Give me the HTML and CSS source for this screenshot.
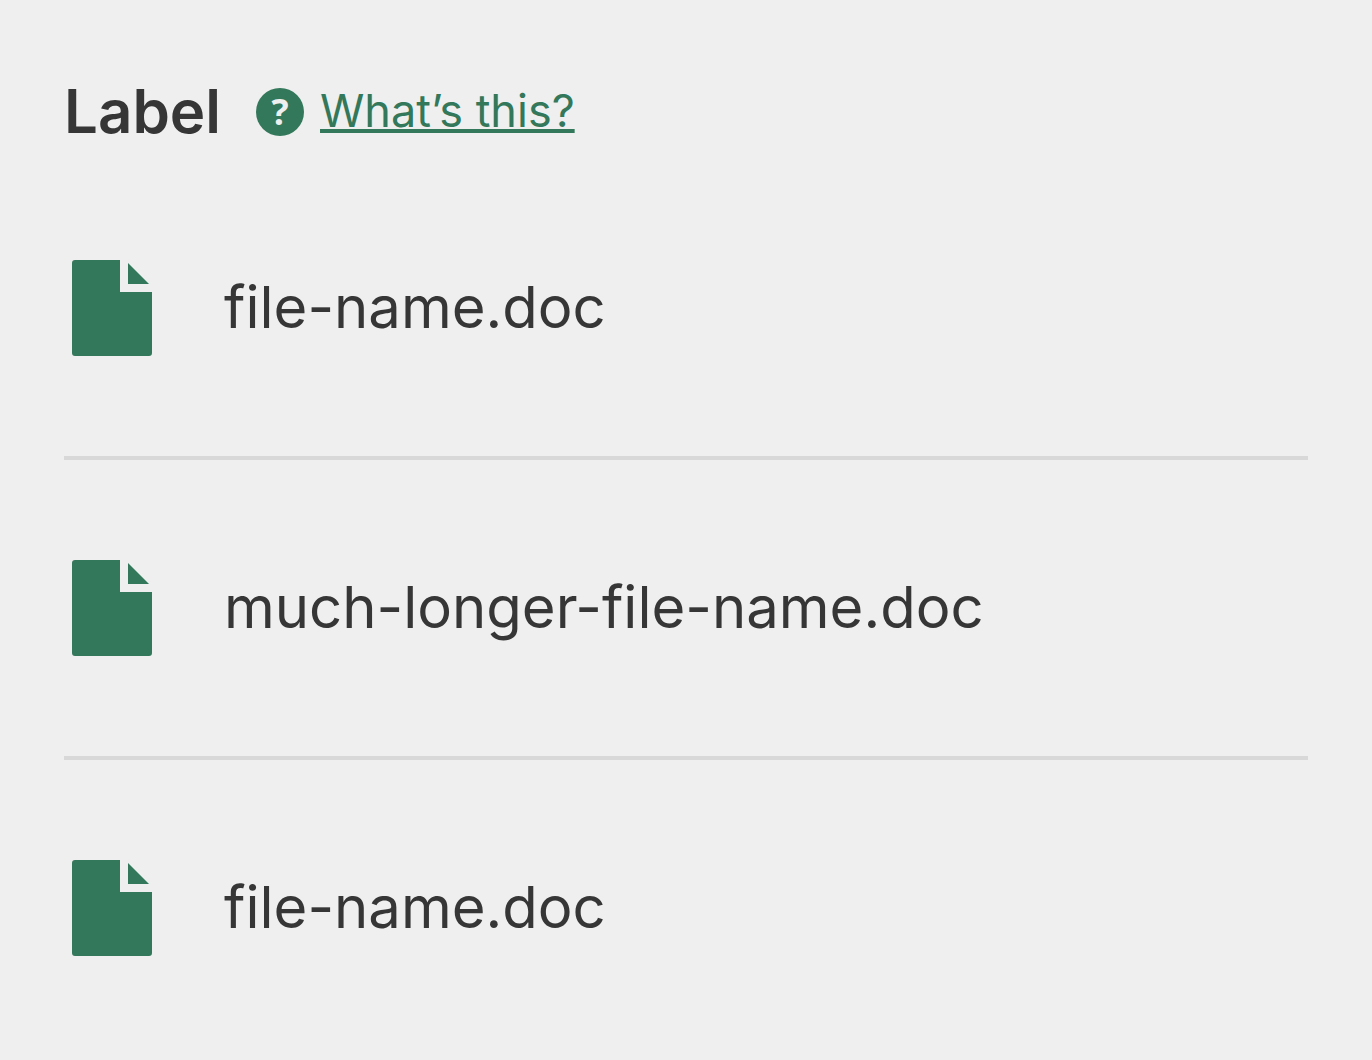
FILE: index.html
```html
<!DOCTYPE html>
<html lang="en">
<head>
<meta charset="utf-8">
<title>Files</title>
<meta name="viewport" content="width=device-width, initial-scale=1">
<link rel="stylesheet" href="styles.css">
</head>
<body>
<main class="panel">
  <header class="panel-header">
    <h1 class="label">Label</h1>
    <a class="help" href="#help">
      <span class="help-icon" aria-hidden="true">?</span>
      <span class="help-text">What’s this?</span>
    </a>
  </header>
  <ul class="files">
    <li class="file">
      <svg class="file-icon" viewBox="0 0 80 96" aria-hidden="true"><path d="M3 0H48V32H80V93Q80 96 77 96H3Q0 96 0 93V3Q0 0 3 0Z"/><path d="M56 3L77 24H56Z"/></svg>
      <span class="file-name">file-name.doc</span>
    </li>
    <li class="file">
      <svg class="file-icon" viewBox="0 0 80 96" aria-hidden="true"><path d="M3 0H48V32H80V93Q80 96 77 96H3Q0 96 0 93V3Q0 0 3 0Z"/><path d="M56 3L77 24H56Z"/></svg>
      <span class="file-name">much-longer-file-name.doc</span>
    </li>
    <li class="file">
      <svg class="file-icon" viewBox="0 0 80 96" aria-hidden="true"><path d="M3 0H48V32H80V93Q80 96 77 96H3Q0 96 0 93V3Q0 0 3 0Z"/><path d="M56 3L77 24H56Z"/></svg>
      <span class="file-name">file-name.doc</span>
    </li>
  </ul>
</main>
</body>
</html>
```
FILE: styles.css
```css
* {
  box-sizing: border-box;
}

body {
  margin: 0;
  background: #efefef;
  color: #363636;
  font-family: Inter, "Liberation Sans", Arial, sans-serif;
}

.panel {
  padding: 64px 64px 0;
}

.panel-header {
  display: flex;
  align-items: center;
  gap: 35px;
  height: 96px;
}

.label {
  margin: 0;
  padding-bottom: 2px;
  font-size: 60px;
  line-height: 92px;
  font-weight: 600;
}

.help {
  display: flex;
  align-items: center;
  gap: 16px;
  color: #33785a;
  text-decoration: none;
}

.help-icon {
  width: 48px;
  height: 48px;
  border-radius: 50%;
  background: #33785a;
  color: #efefef;
  font-family: "Open Sans", sans-serif;
  font-size: 36px;
  font-weight: 700;
  line-height: 48px;
  text-align: center;
}

.help-text {
  padding-bottom: 2px;
  font-size: 45px;
  font-weight: 400;
  line-height: 64px;
  text-decoration: underline;
  text-decoration-thickness: 4px;
  text-decoration-skip-ink: none;
}

.files {
  margin: 0;
  padding: 0;
  list-style: none;
}

.file {
  display: flex;
  align-items: center;
  gap: 72px;
  height: 300px;
  padding-left: 8px;
  border-bottom: 4px solid #d8d8d8;
}

.file:last-child {
  border-bottom-color: transparent;
}

.file-icon {
  flex: none;
  width: 80px;
  height: 96px;
  fill: #33785a;
}

.file-name {
  padding-bottom: 2px;
  font-size: 58px;
  font-weight: 400;
  line-height: 80px;
}
```
